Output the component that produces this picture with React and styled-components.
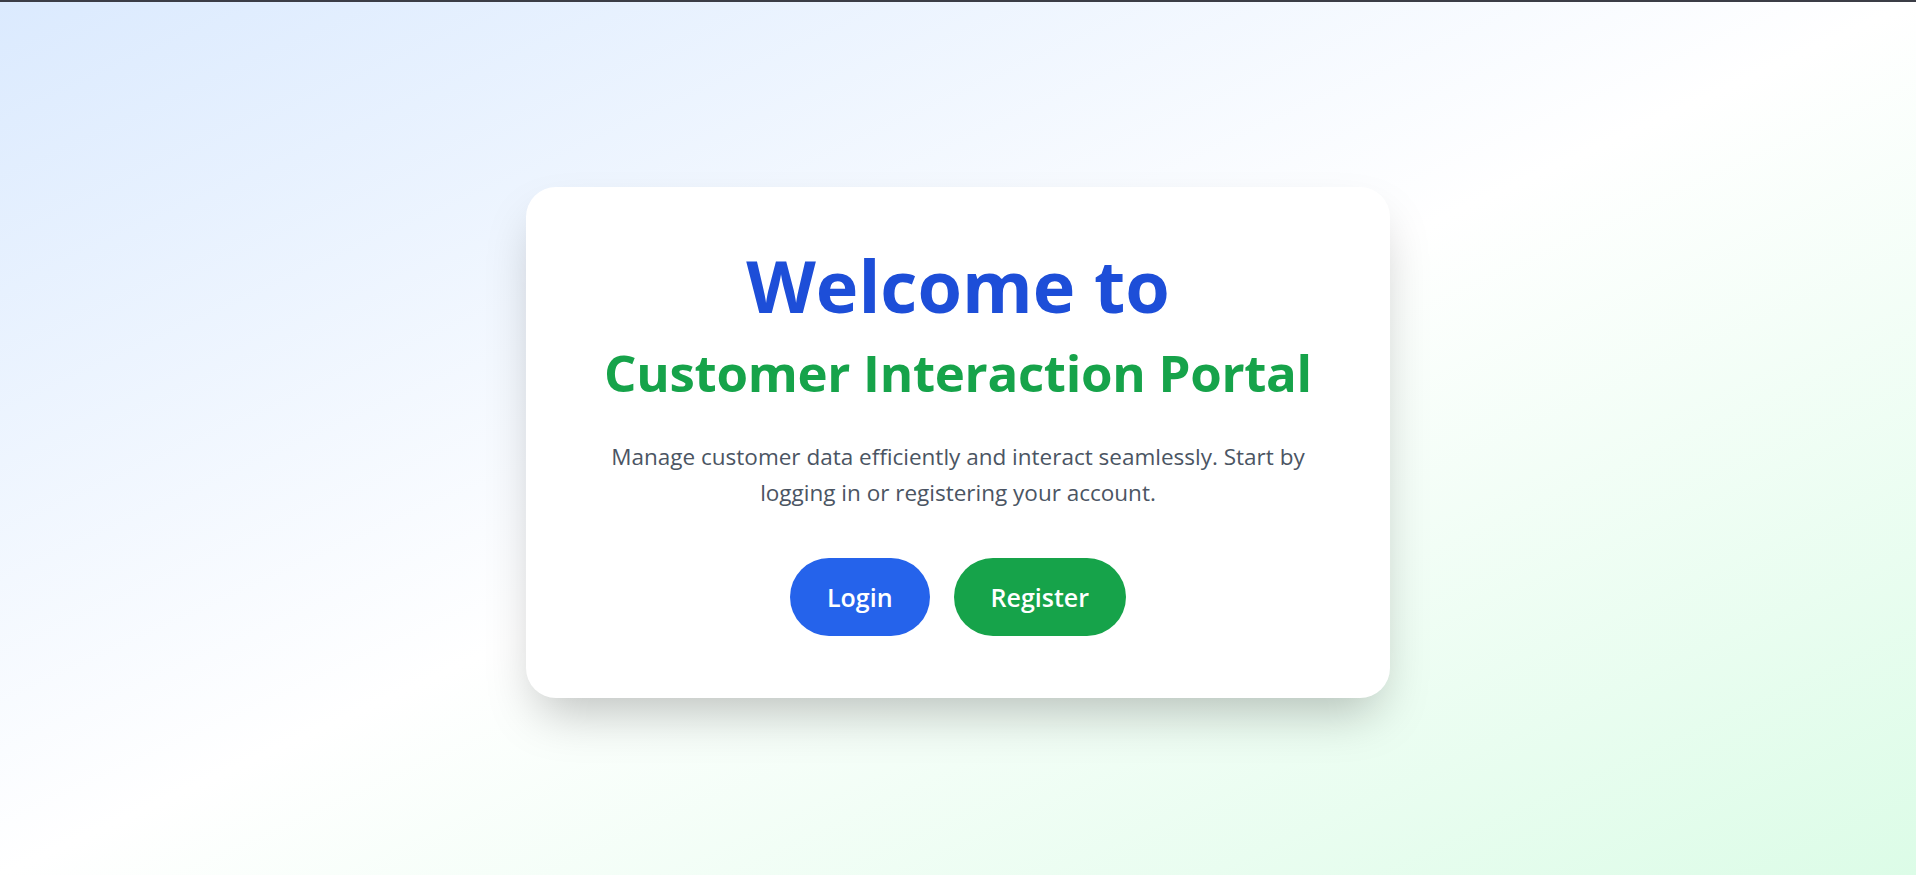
import React from "react";
import styled, { createGlobalStyle } from "styled-components";

const GlobalStyle = createGlobalStyle`
  *, *::before, *::after { box-sizing: border-box; }
  html, body { margin: 0; padding: 0; }
  body {
    font-family: "Open Sans", "Noto Sans", "Liberation Sans", sans-serif;
    -webkit-font-smoothing: antialiased;
  }
`;

const Page = styled.main`
  min-height: 100vh;
  border-top: 2px solid #3b3d46;
  padding-top: 7px;
  display: flex;
  align-items: center;
  justify-content: center;
  background: linear-gradient(to bottom right, #dbeafe 0%, #ffffff 50%, #dcfce7 100%);
`;

const Card = styled.section`
  width: 864px;
  padding: 60px 64px 62px;
  background: #ffffff;
  border-radius: 30px;
  box-shadow: 0 25px 50px -12px rgba(0, 0, 0, 0.25);
  display: flex;
  flex-direction: column;
  align-items: center;
  text-align: center;
`;

const Title = styled.h1`
  margin: 2px 0 0;
  font-size: 72px;
  line-height: 1;
  font-weight: 700;
  color: #1d4ed8;
`;

const Subtitle = styled.h2`
  margin: 26px 0 0;
  font-size: 51px;
  line-height: 1;
  font-weight: 700;
  color: #16a34a;
  letter-spacing: -0.3px;
`;

const Lead = styled.p`
  margin: 41px 0 0;
  font-size: 22.5px;
  line-height: 36px;
  font-weight: 400;
  color: #4b5563;
`;

const Actions = styled.div`
  margin-top: 47px;
  display: flex;
  gap: 24px;
  justify-content: center;
`;

const PillButton = styled.button`
  border: none;
  cursor: pointer;
  height: 78px;
  padding: 0 37px;
  border-radius: 9999px;
  font-family: inherit;
  font-size: 25px;
  font-weight: 600;
  color: #ffffff;
  background: ${(p) => (p.$variant === "green" ? "#16a34a" : "#2563eb")};
`;

export default function App() {
  return (
    <>
      <GlobalStyle />
      <Page>
        <Card>
          <Title>Welcome to</Title>
          <Subtitle>Customer Interaction Portal</Subtitle>
          <Lead>
            Manage customer data efficiently and interact seamlessly. Start by
            logging in or registering your account.
          </Lead>
          <Actions>
            <PillButton $variant="blue">Login</PillButton>
            <PillButton $variant="green">Register</PillButton>
          </Actions>
        </Card>
      </Page>
    </>
  );
}
